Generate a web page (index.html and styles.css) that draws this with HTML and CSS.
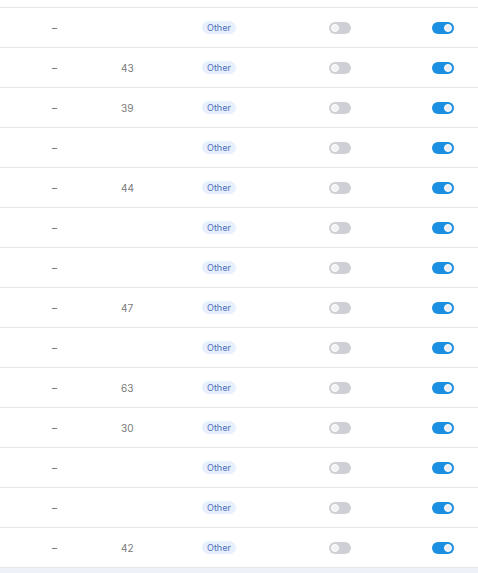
FILE: index.html
```html
<!DOCTYPE html>
<html lang="en">
<head>
    <meta charset="UTF-8">
    <meta name="viewport" content="width=device-width, initial-scale=1.0">
    <title>Fields</title>
    <link rel="stylesheet" href="styles.css">
</head>
<body>

<div class="table">
    <div class="row row-cut"></div>

    <div class="row"><span class="dash">–</span><span class="num"></span><span class="badge">Other</span><span class="toggle"></span><span class="toggle on"></span></div>
    <div class="row"><span class="dash">–</span><span class="num">43</span><span class="badge">Other</span><span class="toggle"></span><span class="toggle on"></span></div>
    <div class="row"><span class="dash">–</span><span class="num">39</span><span class="badge">Other</span><span class="toggle"></span><span class="toggle on"></span></div>
    <div class="row"><span class="dash">–</span><span class="num"></span><span class="badge">Other</span><span class="toggle"></span><span class="toggle on"></span></div>
    <div class="row"><span class="dash">–</span><span class="num">44</span><span class="badge">Other</span><span class="toggle"></span><span class="toggle on"></span></div>
    <div class="row"><span class="dash">–</span><span class="num"></span><span class="badge">Other</span><span class="toggle"></span><span class="toggle on"></span></div>
    <div class="row"><span class="dash">–</span><span class="num"></span><span class="badge">Other</span><span class="toggle"></span><span class="toggle on"></span></div>
    <div class="row"><span class="dash">–</span><span class="num">47</span><span class="badge">Other</span><span class="toggle"></span><span class="toggle on"></span></div>
    <div class="row"><span class="dash">–</span><span class="num"></span><span class="badge">Other</span><span class="toggle"></span><span class="toggle on"></span></div>
    <div class="row"><span class="dash">–</span><span class="num">63</span><span class="badge">Other</span><span class="toggle"></span><span class="toggle on"></span></div>
    <div class="row"><span class="dash">–</span><span class="num">30</span><span class="badge">Other</span><span class="toggle"></span><span class="toggle on"></span></div>
    <div class="row"><span class="dash">–</span><span class="num"></span><span class="badge">Other</span><span class="toggle"></span><span class="toggle on"></span></div>
    <div class="row"><span class="dash">–</span><span class="num"></span><span class="badge">Other</span><span class="toggle"></span><span class="toggle on"></span></div>
    <div class="row"><span class="dash">–</span><span class="num">42</span><span class="badge">Other</span><span class="toggle"></span><span class="toggle on"></span></div>
</div>
<div class="footer"></div>

</body>
</html>
```

FILE: styles.css
```css
body {
    margin: 0;
    font-family: 'Inter', 'Noto Sans', sans-serif;
    background-color: #FFFFFF;
    color: #777;
}
.table {
    width: 100%;
}
.row {
    display: grid;
    grid-template-columns: 69px 81px 127px 103px 1fr;
    align-items: center;
    height: 40px;
    padding-left: 52px;
    box-sizing: border-box;
    border-bottom: 1px solid #E6E7EA;
}
.row-cut {
    height: 8px;
}
.dash {
    font-size: 10px;
    color: #666;
}
.num {
    font-size: 10px;
    color: #7A7A7A;
}
.badge {
    justify-self: start;
    font-size: 9px;
    line-height: 13px;
    padding: 0 5px;
    border-radius: 7px;
    background-color: #E8F0FD;
    color: #4C6FBF;
}
.toggle {
    position: relative;
    justify-self: start;
    width: 22px;
    height: 12px;
    border-radius: 6px;
    background-color: #CDD0D5;
}
.toggle::after {
    content: "";
    position: absolute;
    top: 2px;
    left: 2px;
    width: 6px;
    height: 6px;
    border-radius: 50%;
    background-color: #F2F2F2;
    border: 1px solid #FFFFFF;
}
.toggle.on {
    background-color: #1C8FE3;
}
.toggle.on::after {
    left: auto;
    right: 2px;
    background-color: #E9EEF4;
}
.footer {
    height: 6px;
    background-color: #EEF2F8;
}
```
